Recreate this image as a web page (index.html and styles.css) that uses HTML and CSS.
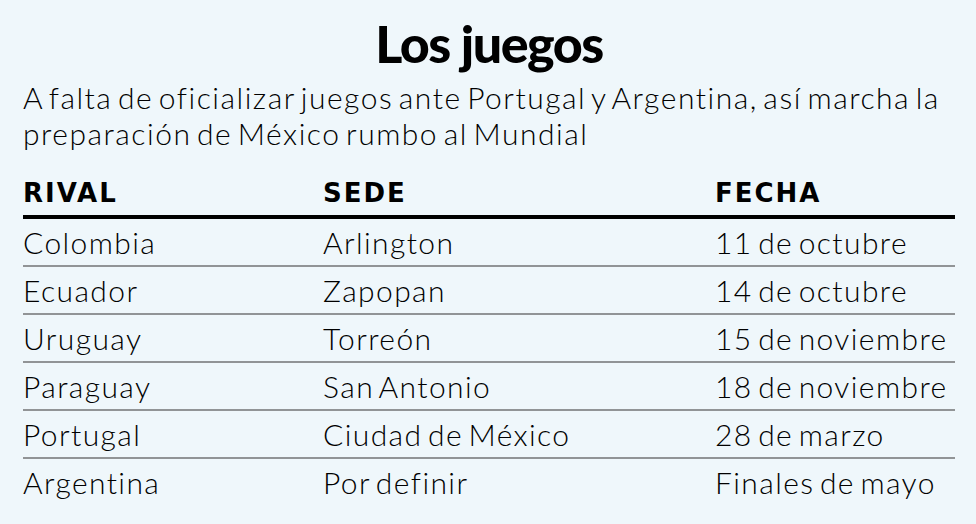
FILE: index.html
```html
<!DOCTYPE html>
<html lang="es">
<head>
<meta charset="utf-8">
<title>Los juegos</title>
<link rel="stylesheet" href="styles.css">
</head>
<body>
<main class="card">
  <h1 class="title">Los juegos</h1>
  <p class="intro">A falta de oficializar juegos ante Portugal y Argentina, así marcha la preparación de México rumbo al Mundial</p>
  <table class="games">
    <thead>
      <tr><th class="c1">RIVAL</th><th class="c2">SEDE</th><th class="c3">FECHA</th></tr>
    </thead>
    <tbody>
      <tr><td>Colombia</td><td>Arlington</td><td>11 de octubre</td></tr>
      <tr><td>Ecuador</td><td>Zapopan</td><td>14 de octubre</td></tr>
      <tr><td>Uruguay</td><td>Torreón</td><td>15 de noviembre</td></tr>
      <tr><td>Paraguay</td><td>San Antonio</td><td>18 de noviembre</td></tr>
      <tr><td>Portugal</td><td>Ciudad de México</td><td>28 de marzo</td></tr>
      <tr><td>Argentina</td><td>Por definir</td><td>Finales de mayo</td></tr>
    </tbody>
  </table>
</main>
</body>
</html>
```
FILE: styles.css
```css
html, body {
  margin: 0;
  padding: 0;
  background: #eff7fb;
}
body {
  width: 976px;
  height: 524px;
  overflow: hidden;
  font-family: "Lato", "Open Sans", sans-serif;
  color: #000;
}
.card {
  padding: 8px 21px 0 23px;
}
.title {
  margin: 0;
  text-align: center;
  font-size: 52px;
  line-height: 70px;
  font-weight: 900;
  letter-spacing: -1.5px;
  color: #000;
}
.intro {
  margin: 1px 0 0;
  font-size: 30px;
  line-height: 36px;
  font-weight: 300;
  letter-spacing: 1.5px;
  word-spacing: -4px;
}
.games {
  width: 100%;
  margin-top: 27px;
  border-collapse: collapse;
  font-size: 30px;
  font-weight: 300;
  letter-spacing: 1.4px;
  word-spacing: -4px;
}
.games th {
  text-align: left;
  font-family: "DejaVu Sans", sans-serif;
  font-weight: 700;
  font-size: 26px;
  letter-spacing: 2px;
  word-spacing: 0;
  padding: 0 0 7px;
  line-height: 30px;
  border-bottom: 4px solid #000;
}
.games .c1 { width: 300px; }
.games .c2 { width: 392px; }
.games td {
  padding: 0;
  height: 46px;
  line-height: 46px;
  border-bottom: 2px solid #919496;
  white-space: nowrap;
}
.games tbody tr:last-child td {
  border-bottom: 0;
}
```
